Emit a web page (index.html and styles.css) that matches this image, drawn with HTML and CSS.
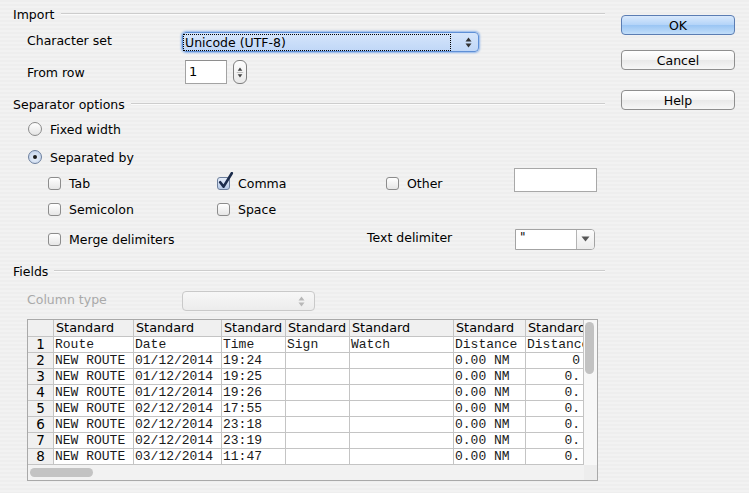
FILE: index.html
```html
<!DOCTYPE html>
<html>
<head>
<meta charset="utf-8">
<link rel="stylesheet" href="styles.css">
</head>
<body>
<div class="dialog">
  <div class="main">
    <div class="sec-head"><span>Import</span><i class="rule"></i></div>
    <div class="frow r-charset">
      <span class="flabel">Character set</span>
      <div class="select-focus">
        <span class="dotted">Unicode (UTF-8)</span>
        <svg class="updown" width="7" height="11" viewBox="0 0 7 11"><path d="M3.5 0.5L6.5 4.5H0.5Z M3.5 10.5L6.5 6.5H0.5Z" fill="#333"/></svg>
      </div>
    </div>
    <div class="frow r-fromrow">
      <span class="flabel">From row</span>
      <div class="num-input">1</div>
      <div class="spin">
        <svg width="13" height="23" viewBox="0 0 13 23"><path d="M6.5 6L9 9.5H4Z M6.5 17L9 13.5H4Z" fill="#444"/><path d="M3 11.5H10" stroke="#bbb" stroke-width="1"/></svg>
      </div>
    </div>

    <div class="sec-head h-sep"><span>Separator options</span><i class="rule"></i></div>
    <div class="radio-row r-fixed">
      <span class="radio"></span><span>Fixed width</span>
    </div>
    <div class="radio-row r-sepby">
      <span class="radio on"><b></b></span><span>Separated by</span>
    </div>

    <div class="crow c1">
      <label class="cb w169"><span class="box"></span><span>Tab</span></label>
      <label class="cb w169"><span class="box checked"><svg width="17" height="19" viewBox="0 0 17 19"><path d="M3.2 10.2L6.6 14.6L14.8 1.2" fill="none" stroke="#1c2c4c" stroke-width="2.6" stroke-linecap="round" stroke-linejoin="round"/></svg></span><span>Comma</span></label>
      <label class="cb w128"><span class="box"></span><span>Other</span></label>
      <div class="other-input"></div>
    </div>
    <div class="crow c2">
      <label class="cb w169"><span class="box"></span><span>Semicolon</span></label>
      <label class="cb"><span class="box"></span><span>Space</span></label>
    </div>
    <div class="crow c3">
      <label class="cb w319"><span class="box"></span><span>Merge delimiters</span></label>
      <span class="tdlabel">Text delimiter</span>
      <div class="combo">
        <span class="combo-text">"</span>
        <span class="combo-btn"><svg width="9" height="6" viewBox="0 0 9 6"><path d="M0.5 0.5H8.5L4.5 5.5Z" fill="#555"/></svg></span>
      </div>
    </div>

    <div class="sec-head h-fields"><span>Fields</span><i class="rule"></i></div>
    <div class="frow r-coltype">
      <span class="flabel disabled">Column type</span>
      <div class="select-disabled">
        <svg width="7" height="11" viewBox="0 0 7 11"><path d="M3.5 0.5L6.5 4.5H0.5Z M3.5 10.5L6.5 6.5H0.5Z" fill="#b8b8b8"/></svg>
      </div>
    </div>

    <div class="grid">
      <div class="grid-view">
        <table>
          <colgroup>
            <col style="width:26px"><col style="width:80px"><col style="width:88px"><col style="width:64px"><col style="width:64px"><col style="width:104px"><col style="width:72px"><col style="width:58px">
          </colgroup>
          <thead>
            <tr><th class="rh"></th><th>Standard</th><th>Standard</th><th>Standard</th><th>Standard</th><th>Standard</th><th>Standard</th><th>Standard</th></tr>
          </thead>
          <tbody>
            <tr><td class="rh">1</td><td>Route</td><td>Date</td><td>Time</td><td>Sign</td><td>Watch</td><td>Distance</td><td>Distance</td></tr>
            <tr><td class="rh">2</td><td>NEW ROUTE</td><td>01/12/2014</td><td>19:24</td><td></td><td></td><td>0.00 NM</td><td class="ra">0</td></tr>
            <tr><td class="rh">3</td><td>NEW ROUTE</td><td>01/12/2014</td><td>19:25</td><td></td><td></td><td>0.00 NM</td><td class="ra">0.</td></tr>
            <tr><td class="rh">4</td><td>NEW ROUTE</td><td>01/12/2014</td><td>19:26</td><td></td><td></td><td>0.00 NM</td><td class="ra">0.</td></tr>
            <tr><td class="rh">5</td><td>NEW ROUTE</td><td>02/12/2014</td><td>17:55</td><td></td><td></td><td>0.00 NM</td><td class="ra">0.</td></tr>
            <tr><td class="rh">6</td><td>NEW ROUTE</td><td>02/12/2014</td><td>23:18</td><td></td><td></td><td>0.00 NM</td><td class="ra">0.</td></tr>
            <tr><td class="rh">7</td><td>NEW ROUTE</td><td>02/12/2014</td><td>23:19</td><td></td><td></td><td>0.00 NM</td><td class="ra">0.</td></tr>
            <tr><td class="rh">8</td><td>NEW ROUTE</td><td>03/12/2014</td><td>11:47</td><td></td><td></td><td>0.00 NM</td><td class="ra">0.</td></tr>
          </tbody>
        </table>
      </div>
      <div class="vscroll"><div class="vthumb"></div></div>
      <div class="hscroll"><div class="hthumb"></div></div>
      <div class="corner"></div>
    </div>
  </div>

  <div class="buttons">
    <button class="btn default">OK</button>
    <button class="btn b-cancel">Cancel</button>
    <button class="btn b-help">Help</button>
  </div>
</div>
</body>
</html>
```

FILE: styles.css
```css
html, body {
  margin: 0;
  padding: 0;
}
body {
  width: 749px;
  height: 493px;
  overflow: hidden;
  font-family: "DejaVu Sans", "Noto Sans", sans-serif;
  font-size: 12.5px;
  color: #000;
  background: repeating-linear-gradient(to bottom, #eeeeee 0, #eeeeee 2px, #f2f2f2 2px, #f2f2f2 4px);
}
.dialog {
  display: flex;
}
.main {
  width: 592px;
  padding: 6px 0 0 13px;
}
.sec-head {
  height: 16px;
  display: flex;
  align-items: center;
}
.sec-head .rule {
  flex: 1;
  height: 0;
  border-top: 1px solid #cdcdcd;
  border-bottom: 1px solid #fbfbfb;
  margin-left: 6px;
}
.h-sep { margin-top: 12px; }
.h-fields { margin-top: 11px; }

.frow {
  display: flex;
  align-items: center;
  padding-left: 14px;
}
.flabel { width: 155px; }
.r-charset .flabel { margin-top: -3px; }
.r-coltype .flabel { margin-top: -4px; }
.flabel.disabled { color: #a9a9a9; }
.r-charset { margin-top: 10px; height: 20px; }
.r-fromrow { margin-top: 8px; height: 24px; }
.r-coltype { margin-top: 12px; height: 20px; }

.select-focus {
  box-sizing: border-box;
  width: 297px;
  height: 20px;
  border: 1px solid #5e8fd6;
  border-radius: 4px;
  background: linear-gradient(#d5e5fb, #c0d7f7);
  box-shadow: 0 0 2px 1px #8db4ea;
  display: flex;
  align-items: center;
  padding: 0 6px 0 1px;
}
.dotted {
  flex: 1;
  height: 15px;
  line-height: 15px;
  outline: 1px dotted #000;
  padding-left: 1px;
  margin-right: 15px;
}
.num-input {
  box-sizing: border-box;
  width: 42px;
  height: 24px;
  margin-left: 3px;
  background: #fff;
  border: 1px solid #a3a3a3;
  border-top-color: #8e8e8e;
  padding-left: 3px;
  line-height: 22px;
  font-size: 13px;
}
.spin {
  box-sizing: border-box;
  width: 14px;
  height: 24px;
  margin-left: 6px;
  border: 1px solid #7f7f7f;
  border-radius: 6px;
  background: linear-gradient(#fdfdfd, #e9e9e9);
  display: flex;
  align-items: center;
  justify-content: center;
  overflow: hidden;
}

.radio-row {
  display: flex;
  align-items: center;
  height: 16px;
  padding-left: 15px;
  gap: 8px;
}
.r-fixed { margin-top: 9px; }
.r-sepby { margin-top: 12px; }
.radio {
  box-sizing: border-box;
  width: 14px;
  height: 14px;
  border-radius: 50%;
  border: 1px solid #8a8a8a;
  background: linear-gradient(#ffffff, #e4e4e4);
  display: flex;
  align-items: center;
  justify-content: center;
}
.radio.on {
  border-color: #6c7f9e;
  background: radial-gradient(circle at 50% 60%, #eaf1fb, #b9cbe6);
}
.radio.on b {
  width: 4px;
  height: 4px;
  border-radius: 50%;
  background: #1b1b1b;
}

.crow {
  display: flex;
  align-items: center;
  height: 26px;
  padding-left: 35px;
}
.c1 { margin-top: 5px; }
.c3 { margin-top: 4px; }
.cb {
  display: flex;
  align-items: center;
  gap: 8px;
}
.w169 { width: 169px; }
.w128 { width: 128px; }
.w319 { width: 319px; }
.box {
  box-sizing: border-box;
  width: 13px;
  height: 13px;
  border: 1px solid #8c8c8c;
  border-radius: 3px;
  background: linear-gradient(#ffffff, #e6e6e6);
  position: relative;
}
.box.checked {
  border-color: #6d7f9c;
  background: linear-gradient(#e6eefb, #b6c9e6);
}
.box.checked svg {
  position: absolute;
  left: -1px;
  top: -6px;
}
.other-input {
  box-sizing: border-box;
  width: 83px;
  height: 24px;
  background: #fff;
  border: 1px solid #a8a8a8;
  align-self: flex-start;
  margin-top: -2px;
}
.tdlabel {
  width: 148px;
  margin-top: -4px;
}
.combo {
  box-sizing: border-box;
  width: 80px;
  height: 21px;
  display: flex;
  border: 1px solid #a3a3a3;
  border-radius: 0 4px 4px 0;
  background: #fff;
}
.combo-text {
  flex: 1;
  padding-left: 4px;
  line-height: 15px;
  font-size: 12px;
  border-right: 1px solid #b4b4b4;
}
.combo-btn {
  width: 17px;
  display: flex;
  align-items: center;
  justify-content: center;
  background: linear-gradient(#fcfcfc, #ececec);
  border-radius: 0 3px 3px 0;
}

.select-disabled {
  box-sizing: border-box;
  width: 133px;
  height: 20px;
  border: 1px solid #c9c9c9;
  border-radius: 4px;
  background: linear-gradient(#f7f7f7, #ececec);
  display: flex;
  align-items: center;
  justify-content: flex-end;
  padding-right: 9px;
}

.grid {
  box-sizing: border-box;
  margin: 8px 0 0 14px;
  width: 571px;
  height: 162px;
  border: 1px solid #a9a9a9;
  display: grid;
  grid-template-columns: 556px 13px;
  grid-template-rows: 145px 15px;
  background: #f4f4f4;
}
.grid-view {
  overflow: hidden;
  background: #fff;
}
table {
  table-layout: fixed;
  width: 556px;
  border-collapse: separate;
  border-spacing: 0;
}
th, td {
  padding: 0;
  white-space: nowrap;
  overflow: hidden;
  border-right: 1px solid #c4c4c4;
  border-bottom: 1px solid #c4c4c4;
  text-align: left;
}
th {
  font-weight: normal;
  background: #f0f0f0;
  line-height: 16px;
  padding-left: 2px;
  font-size: 12.8px;
}
td {
  font-family: "Liberation Mono", "DejaVu Sans Mono", monospace;
  font-size: 13px;
  line-height: 15px;
  color: #1a1a1a;
  padding-left: 1px;
}
td.rh, th.rh {
  background: #f0f0f0;
  font-family: "DejaVu Sans", sans-serif;
  font-size: 13.5px;
  text-align: center;
  padding: 0;
  color: #000;
}
td.ra {
  text-align: right;
  padding-right: 3px;
}
.vscroll {
  background: #f7f7f7;
  padding: 2px 0 0 1px;
}
.vthumb {
  width: 9px;
  height: 52px;
  border-radius: 5px;
  background: #c2c2c2;
}
.hscroll {
  background: #f2f2f2;
  padding: 3px 0 0 2px;
}
.hthumb {
  width: 63px;
  height: 9px;
  border-radius: 5px;
  background: #c3c3c3;
}
.corner {
  background: #ededed;
}

.buttons {
  margin-left: 16px;
  padding-top: 15px;
  display: flex;
  flex-direction: column;
  width: 114px;
}
.btn {
  box-sizing: border-box;
  width: 114px;
  height: 20px;
  padding: 0;
  font-family: "DejaVu Sans", sans-serif;
  font-size: 12.5px;
  color: #000;
  border: 1px solid #8e8e8e;
  border-radius: 4px;
  background: linear-gradient(#ffffff 0%, #f3f3f3 50%, #e9e9e9 51%, #f7f7f7 100%);
}
.btn.default {
  border-color: #5b7db3;
  background: linear-gradient(#d9e9fc 0%, #b3d3f8 50%, #9ac5f4 51%, #c2def9 100%);
}
.b-cancel { margin-top: 15px; }
.b-help { margin-top: 20px; }
```
